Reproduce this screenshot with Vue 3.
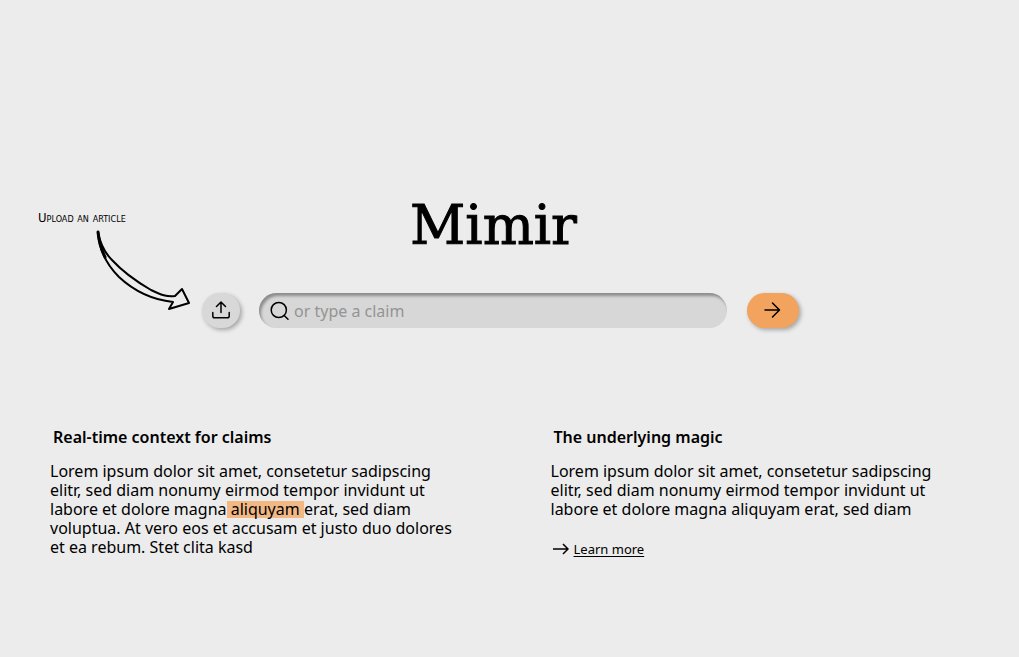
<script setup>
import { ref } from 'vue'

const claim = ref('')
</script>

<template>
  <main class="page">
    <form class="hero" @submit.prevent>
      <div class="hint">
        <label class="hint-text" for="upload">Upload an article</label>
        <svg class="hint-arrow" viewBox="0 0 96 82" aria-hidden="true">
          <path class="sketch" d="M3 3C5 14 9 23 17 31C27 42 44 54 56 61C66 66 72 68 80 67L87 60L94 74L74 80L78 73C60 71 40 63 24 48C11 35 4 20 3 3Z" />
          <path class="sketch heavy" d="M3 3C4 13 6 20 10 28" />
        </svg>
      </div>
      <h1 class="title">Mimir</h1>
      <button id="upload" class="pill upload" type="button" aria-label="Upload an article">
        <svg class="icon" viewBox="0 0 20 20" aria-hidden="true">
          <path d="M10 11.500V1M5.500 5.500L10 1L14.500 5.500M1.800 11.500V15Q1.800 16.800 3.500 16.800H16.500Q18.200 16.800 18.200 15V11.500" />
        </svg>
      </button>
      <div class="search">
        <svg class="icon" viewBox="0 0 20 20" aria-hidden="true">
          <circle cx="8.800" cy="9" r="7.600" />
          <path d="M14.200 14.500L18 18.200" />
        </svg>
        <input v-model="claim" class="field" type="text" placeholder="or type a claim" aria-label="Type a claim" />
      </div>
      <button class="pill go" type="submit" aria-label="Check claim">
        <svg class="icon" viewBox="0 0 20 20" aria-hidden="true">
          <path d="M2 9H16.500M9.500 2L16.500 9L9.500 16" />
        </svg>
      </button>
    </form>

    <div class="columns">
      <section>
        <h2 class="heading">Real-time context for claims</h2>
        <p class="copy">
          Lorem ipsum dolor sit amet, consetetur sadipscing<br />
          elitr, sed diam nonumy eirmod tempor invidunt ut<br />
          labore et dolore magna<mark class="mark">&nbsp;aliquyam&nbsp;</mark>erat, sed diam<br />
          voluptua. At vero eos et accusam et justo duo dolores<br />
          et ea rebum. Stet clita kasd
        </p>
      </section>
      <section>
        <h2 class="heading">The underlying magic</h2>
        <p class="copy">
          Lorem ipsum dolor sit amet, consetetur sadipscing<br />
          elitr, sed diam nonumy eirmod tempor invidunt ut<br />
          labore et dolore magna aliquyam erat, sed diam
        </p>
        <div class="more">
          <svg class="more-arrow" viewBox="0 0 16 12" aria-hidden="true">
            <path d="M0 6H15M10 1L15 6L10 11" />
          </svg>
          <a class="link" href="#">Learn more</a>
        </div>
      </section>
    </div>
  </main>
</template>

<style>
body {
  margin: 0;
  background: #ececec;
}
</style>

<style scoped>
.page {
  box-sizing: border-box;
  min-height: 100vh;
  padding-top: 190px;
  color: #000;
  background: #ececec;
  font-family: "Noto Sans", sans-serif;
}

.hero {
  display: grid;
  grid-template-columns: 164px 38px minmax(0, 1fr) 52px;
  grid-template-rows: 103px 35px;
  padding: 0 220px 0 38px;
}

.hint {
  grid-row: 1 / 3;
  padding-top: 18px;
}

.hint-text {
  display: block;
  height: 20px;
  font-family: "Liberation Sans Narrow", "DejaVu Sans Condensed", sans-serif;
  font-size: 13px;
  line-height: 20px;
  font-variant: small-caps;
  white-space: nowrap;
}

.hint-arrow {
  display: block;
  width: 96px;
  height: 82px;
  margin: 1px 0 0 57px;
}

.sketch {
  fill: none;
  stroke: #000;
  stroke-width: 2;
  stroke-linejoin: round;
  stroke-linecap: round;
}

.heavy {
  stroke-width: 3;
}

.title {
  grid-column: 3;
  margin: 0;
  font-family: "DejaVu Serif", serif;
  font-size: 54px;
  font-weight: 400;
  line-height: 72px;
  text-align: center;
  -webkit-text-stroke: 1px #000;
}

.pill {
  display: flex;
  align-items: center;
  justify-content: center;
  padding: 0;
  border: 0;
  border-radius: 18px;
  color: #000;
  box-shadow: 2px 2px 4px rgba(0, 0, 0, 0.3);
  cursor: pointer;
}

.upload {
  grid-column: 2;
  background: #d8d8d8;
}

.go {
  background: #f2a35e;
}

.icon {
  flex: none;
  width: 20px;
  height: 20px;
  fill: none;
  stroke: #000;
  stroke-width: 1.5;
  stroke-linecap: round;
  stroke-linejoin: round;
}

.search {
  display: flex;
  align-items: center;
  gap: 4px;
  margin: 0 20px 0 19px;
  padding: 0 18px 0 11px;
  border-radius: 18px;
  background: #d7d7d7;
  box-shadow: inset 2px 3px 3px rgba(0, 0, 0, 0.35);
}

.field {
  flex: 1;
  min-width: 0;
  padding: 0;
  border: 0;
  outline: 0;
  background: transparent;
  color: #000;
  font-family: inherit;
  font-size: 16px;
  line-height: 24px;
}

.field::placeholder {
  color: #949494;
  opacity: 1;
}

.columns {
  display: grid;
  grid-template-columns: 1fr 1fr;
  gap: 32px;
  padding: 99px 0 0 50px;
}

.heading {
  margin: 0 0 15px 3px;
  font-size: 16px;
  font-weight: 600;
  line-height: 20px;
}

.copy {
  margin: 0;
  font-size: 16px;
  line-height: 19px;
  white-space: nowrap;
}

.mark {
  display: inline-block;
  line-height: 17px;
  color: inherit;
  background: #f2b884;
}

.more {
  display: flex;
  align-items: center;
  gap: 5px;
  margin: 20px 0 0 2px;
}

.more-arrow {
  width: 16px;
  height: 12px;
  fill: none;
  stroke: #000;
  stroke-width: 1.5;
}

.link {
  color: inherit;
  font-size: 13px;
  line-height: 20px;
  text-underline-offset: 2px;
}
</style>
